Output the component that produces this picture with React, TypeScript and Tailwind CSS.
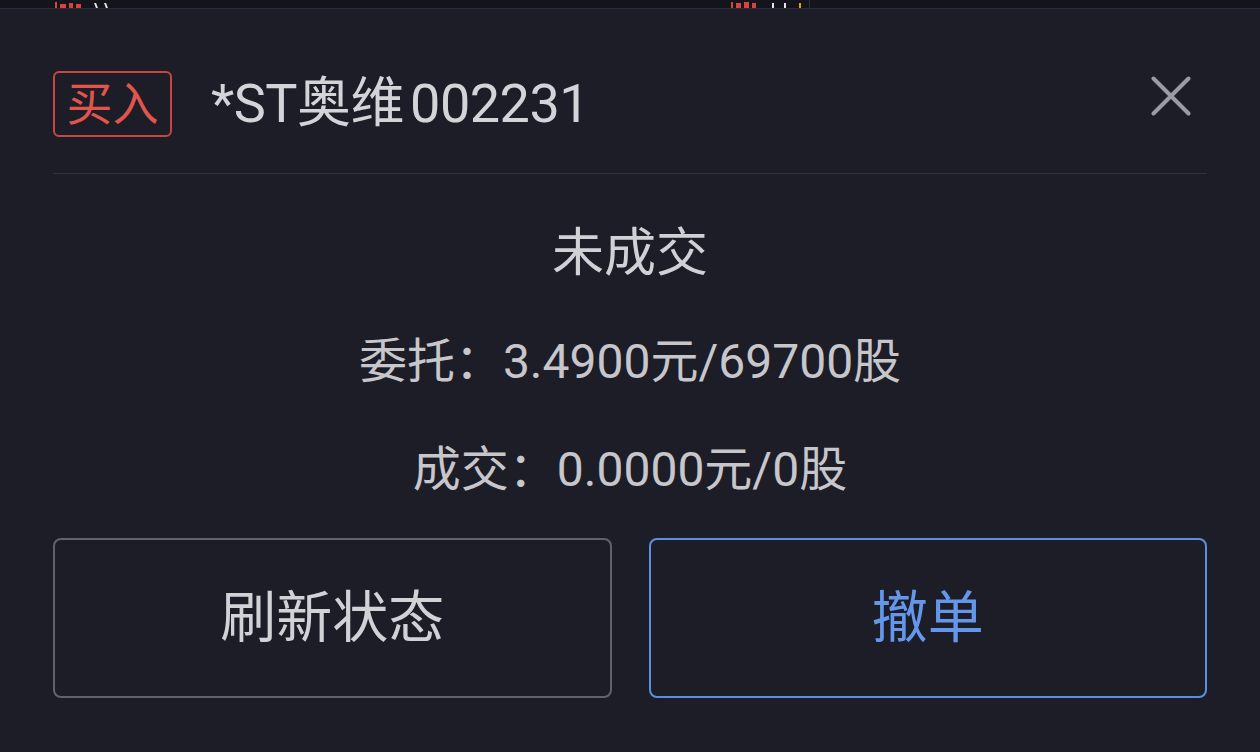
const font = { fontFamily: 'Roboto, "Noto Sans CJK SC", sans-serif' };

function CloseIcon() {
  return (
    <svg width="40" height="40" viewBox="0 0 40 40" fill="none">
      <path d="M2.5 2.5L37.5 37.5M37.5 2.5L2.5 37.5" stroke="#9b9ba2" strokeWidth="4" strokeLinecap="round" />
    </svg>
  );
}

export default function App() {
  return (
    <div
      className="w-[1260px] h-[752px] bg-[#1d1d28] text-[#cfcfd4] overflow-hidden"
      style={font}
    >
      {/* clipped row of the list underneath */}
      <div className="h-[9px] bg-[#14151c] border-b border-[#2d2e39] overflow-hidden flex items-end">
        <div className="flex items-end h-[7px] ml-[55px] gap-[3px]">
          <span className="w-[2px] h-[6px] bg-[#d8433b]" />
          <span className="w-[6px] h-[4px] bg-[#d8433b]" />
          <span className="w-[4px] h-[5px] bg-[#d8433b]" />
          <span className="w-[5px] h-[4px] bg-[#d8433b]" />
        </div>
        <span className="ml-[14px] w-[12px] h-[5px] border-l-2 border-r-2 border-[#e6e6ea] skew-x-[20deg]" />
        <div className="flex items-end h-[7px] ml-[624px] gap-[3px]">
          <span className="w-[2px] h-[6px] bg-[#d8433b]" />
          <span className="w-[5px] h-[5px] bg-[#d8433b]" />
          <span className="w-[5px] h-[6px] bg-[#d8433b]" />
          <span className="w-[4px] h-[5px] bg-[#d8433b]" />
        </div>
        <span className="ml-[16px] w-[14px] h-[5px] border-l-2 border-r-2 border-[#e6e6ea]" />
        <span className="ml-[10px] w-[5px] h-[5px] border-r-2 border-[#e0a020]" />
        <span className="ml-[8px] w-px h-[8px] bg-[#2d2e39]" />
      </div>

      {/* header */}
      <div className="mx-[53px] pt-[62px] pb-[36px] border-b border-[#30313c] flex items-center">
        <div className="w-[119px] h-[66px] rounded-[6px] border-2 border-[#c9463f] flex items-center justify-center">
          <span className="text-[46px] leading-none text-[#e0564d]">买入</span>
        </div>
        <div className="ml-[39px] text-[54px] leading-none text-[#d4d4d8] tracking-[-0.5px]">
          *ST奥维<span className="ml-[6px]">002231</span>
        </div>
        <button className="ml-auto mr-[16px] self-start mt-[5px]">
          <CloseIcon />
        </button>
      </div>

      {/* order info */}
      <div className="flex flex-col items-center">
        <div className="mt-[54px] text-[52px] leading-[52px] text-[#d0d0d5]">未成交</div>
        <div className="mt-[58px] text-[48px] leading-[48px] text-[#c6c6cb]">委托：3.4900元/69700股</div>
        <div className="mt-[60px] text-[48px] leading-[48px] text-[#c6c6cb]">成交：0.0000元/0股</div>
      </div>

      {/* actions */}
      <div className="mx-[53px] mt-[44px] grid grid-cols-2 gap-[37px]">
        <button className="h-[160px] rounded-[8px] border-2 border-[#62626b] text-[56px] text-[#d2d2d6]">
          刷新状态
        </button>
        <button className="h-[160px] rounded-[8px] border-2 border-[#5b8ee0] text-[56px] text-[#6497ea]">
          撤单
        </button>
      </div>
    </div>
  );
}
